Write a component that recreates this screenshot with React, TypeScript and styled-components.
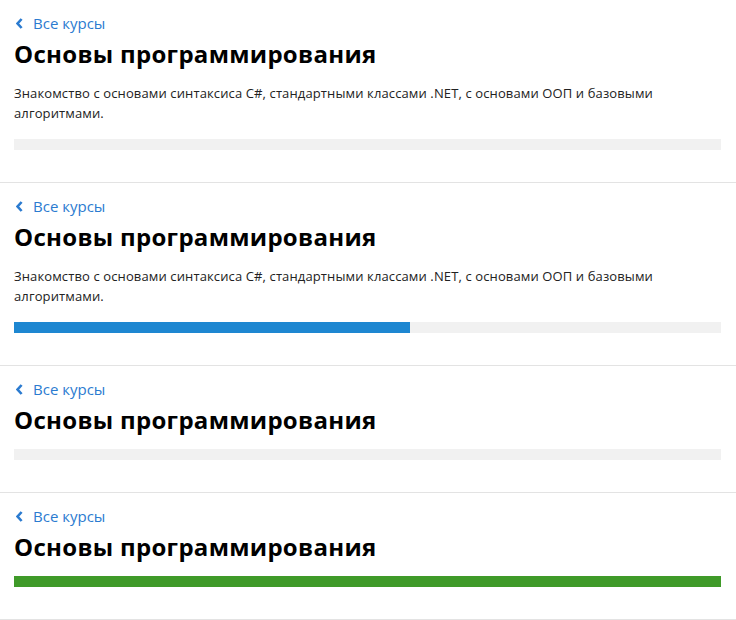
import styled, { createGlobalStyle } from 'styled-components';

const GlobalStyle = createGlobalStyle`
    body {
        margin: 0;
        background: #fff;
        font-family: "Open Sans", "Noto Sans", sans-serif;
    }
`;

const List = styled.div`
    display: flex;
    flex-direction: column;
    width: 736px;
`;

const Section = styled.section`
    padding: 13px 15px 32px 14px;
    border-bottom: 1px solid #e3e3e3;
`;

const BackLink = styled.a`
    display: flex;
    align-items: center;
    gap: 10px;
    height: 20px;
    margin-left: 2px;
    font-size: 15px;
    color: #2b7bd0;
    text-decoration: none;
    cursor: pointer;
`;

const Title = styled.h1`
    margin: 5px 0 13px;
    font-size: 24px;
    line-height: 32px;
    font-weight: 700;
    letter-spacing: 0.3px;
    color: #000;
`;

const Description = styled.p`
    margin: 0 0 16px;
    font-size: 13px;
    line-height: 20px;
    letter-spacing: 0.12px;
    color: #222;
    max-width: 690px;
`;

const Track = styled.div`
    height: 11px;
    background: #f1f1f1;
`;

const Fill = styled.div<{ $color: string }>`
    height: 100%;
    background: ${(p) => p.$color};
`;

const Chevron = () => (
    <svg width="7" height="11" viewBox="0 0 7 11">
        <path d="M5.6 1 L1.6 5.5 L5.6 10" fill="none" stroke="currentColor" strokeWidth="2.6" />
    </svg>
);

type Course = { desc?: string; progress: number; color: string };

const text =
    'Знакомство с основами синтаксиса C#, стандартными классами .NET, с основами ООП и базовыми алгоритмами.';

const courses: Course[] = [
    { desc: text, progress: 0, color: '#1e87d1' },
    { desc: text, progress: 56, color: '#1e87d1' },
    { progress: 0, color: '#1e87d1' },
    { progress: 100, color: '#3f9a29' },
];

const App = () => {
    return (
        <>
            <GlobalStyle />
            <List>
                {courses.map((c, i) => (
                    <Section key={i}>
                        <BackLink>
                            <Chevron />
                            Все курсы
                        </BackLink>
                        <Title>Основы программирования</Title>
                        {c.desc && <Description>{c.desc}</Description>}
                        <Track>
                            <Fill $color={c.color} style={{ width: `${c.progress}%` }} />
                        </Track>
                    </Section>
                ))}
            </List>
        </>
    );
};

export default App;
